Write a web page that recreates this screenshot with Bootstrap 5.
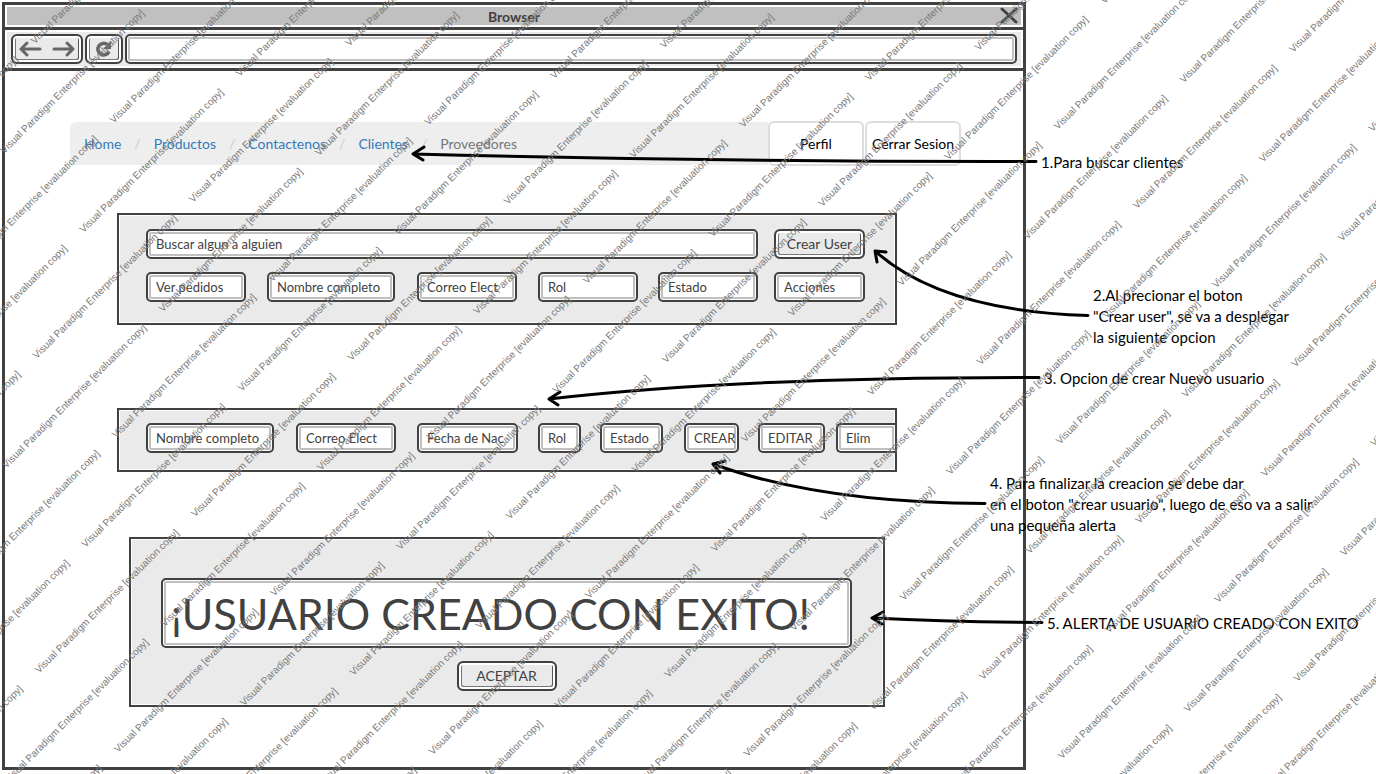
<!DOCTYPE html>
<html lang="es">
<head>
<meta charset="utf-8">
<meta name="viewport" content="width=device-width, initial-scale=1">
<title>Browser</title>
<link href="https://cdn.jsdelivr.net/npm/bootstrap@5.3.0/dist/css/bootstrap.min.css" rel="stylesheet">
<style>
  :root { --ink: #414141; --ring: #c0c0c0; --fill: #eaeaea; }
  body { font-family: "Comic Sans MS", Lato, sans-serif; font-size: 13px; line-height: 20px; color: var(--ink); background: #fff; }
  .board { display: grid; grid-template-columns: 1024fr 350fr; padding: 2px 0 0 2px; min-height: 100vh; overflow: hidden; }

  /* browser window */
  .window { border: 3px solid var(--ink); min-height: calc(100vh - 6px); align-self: start; }
  .titlebar { background: var(--ring); border: 2px solid #fff; height: 22px; line-height: 20px; font-size: 14px; font-weight: 700; }
  .close-btn { right: 2px; top: 0; width: 20px; height: 18px; }
  .toolbar { border-top: 3px solid var(--ink); border-bottom: 3px solid var(--ink); background: var(--fill); box-shadow: inset 0 0 0 2px #fff; padding: 4px 6px; gap: 2px; height: 44px; }
  .icon-btn { background: none; border: 0; padding: 0; flex: 1; display: flex; align-items: center; justify-content: center; }

  /* sketched controls */
  .sketch-btn { background: var(--fill); color: var(--ink); border: 2px solid var(--ink); border-radius: 6px; height: 30px; padding: 0; font-size: 14px; line-height: 20px;
    box-shadow: inset 0 0 0 2px #fff, inset 1px -1px 0 2px #777, inset -1px -1px 0 2px #555; }
  .sketch-input { background: #fff; color: var(--ink); border: 2px solid var(--ink); border-radius: 5px; height: 30px; width: 100%; min-width: 0; padding: 0 0 0 8px; font-size: 13px;
    box-shadow: inset 0 0 0 1px #fff, inset 0 0 0 3px var(--ring); outline: 0; }
  .nav-group { width: 72px; }
  .reload { width: 38px; }

  /* site navigation */
  .site-nav { margin: 50px 62px 0 65px; }
  .crumbs { background: #eee; border-radius: 6px 0 0 6px; margin: 1px 0; padding: 1px 14px 0; font-size: 14px; line-height: 42px; flex: 1; }
  .crumbs a { color: #337ab7; text-decoration: none; }
  .crumbs li + li::before { content: "/"; color: #ccc; padding: 0 13px; }
  .crumbs .current { color: #777; }
  .tab-btn { background: #fff; border: 2px solid #ddd; border-radius: 6px; height: 45px; width: 96px; padding: 0; color: #000; font-size: 14px; white-space: nowrap; margin-left: 1px; }

  /* panels */
  .panel { background: var(--fill); border: 2px solid var(--ink); box-shadow: inset 0 0 0 1px #fff; margin: 0 126px 0 112px; }
  .panel-search { margin-top: 47px; padding: 14px 30px 21px 27px; }
  .panel-new { margin-top: 83px; padding: 13px 0 17px 27px; }
  .panel-alert { margin: 65px 138px 0 124px; padding: 39px 31px 14px 30px; }
  .search-grid { display: grid; row-gap: 13px; grid-template-columns: 100fr 21fr 128fr 22fr 100fr 21fr 100fr 20fr 100fr 16fr 91fr; }
  .new-grid { display: grid; grid-template-columns: 128fr 22fr 100fr 21fr 101fr 20fr 43fr 19fr 63fr 21fr 55fr 19fr 67fr 11fr 59fr; }
  .c1 { grid-column: 1; } .c2 { grid-column: 3; } .c3 { grid-column: 5; } .c4 { grid-column: 7; }
  .c5 { grid-column: 9; } .c6 { grid-column: 11; } .c7 { grid-column: 13; } .c8 { grid-column: 15; }
  .wide { grid-column: 1 / 10; }
  .cut { border-right: 0; border-radius: 5px 0 0 5px; }
  .alert-field { height: 70px; font-size: 43px; }
  .accept { width: 100px; margin-top: 13px; }

  /* notes beside the window */
  .notes { color: #000; font-size: 15px; line-height: 21px; padding-top: 150px; white-space: nowrap; z-index: 1; }
  .notes p { margin: 0; }
  .n1 { padding-left: 15px; }
  .notes .n2 { margin-top: 112px; padding-left: 67px; }
  .notes .n3 { margin-top: 20px; padding-left: 18px; }
  .notes .n4 { margin: 84px 0 0 -36px; }
  .notes .n5 { margin-top: 77px; padding-left: 21px; }

  .overlay { position: absolute; left: 0; top: 0; width: 100%; height: 100%; pointer-events: none; z-index: 2; }
  .overlay-arrows { height: 774px; }
  .stamp { font: 10px "Liberation Sans", Arial, sans-serif; fill: #7a7a7a; }
</style>
</head>
<body>
<div class="board position-relative">
  <main class="window">
    <header class="titlebar text-center position-relative">Browser
      <button class="icon-btn close-btn position-absolute" aria-label="Cerrar"><svg width="20" height="18" fill="none" stroke="#414141" stroke-width="3" stroke-linecap="round"><path d="M3 2 17 15M17 2 3 15"/></svg></button>
    </header>
    <div class="toolbar d-flex">
      <div class="sketch-btn nav-group d-flex flex-shrink-0">
        <button class="icon-btn" aria-label="Atrás"><svg width="24" height="18" fill="none" stroke="#666" stroke-width="3" stroke-linecap="round" stroke-linejoin="round"><path d="M22 9H3M9 3 3 9l6 6"/></svg></button>
        <button class="icon-btn" aria-label="Adelante"><svg width="24" height="18" fill="none" stroke="#666" stroke-width="3" stroke-linecap="round" stroke-linejoin="round"><path d="M2 9h19M15 3l6 6-6 6"/></svg></button>
      </div>
      <button class="sketch-btn reload d-flex flex-shrink-0 align-items-center justify-content-center" aria-label="Recargar"><svg width="18" height="18"><path d="M14 11.500A5.800 5.800 0 1 1 12.500 4.800" fill="none" stroke="#666" stroke-width="3.500"/><path d="M16 1v8H8z" fill="#666"/></svg></button>
      <input class="sketch-input" type="text" aria-label="Dirección">
    </div>

    <div class="site-nav d-flex">
      <nav class="crumbs" aria-label="Secciones">
        <ol class="list-unstyled d-flex m-0">
          <li><a href="#">Home</a></li>
          <li><a href="#">Productos</a></li>
          <li><a href="#">Contactenos</a></li>
          <li><a href="#">Clientes</a></li>
          <li class="current">Proveedores</li>
        </ol>
      </nav>
      <button class="tab-btn ms-0">Perfil</button>
      <button class="tab-btn">Cerrar Sesion</button>
    </div>

    <section class="panel panel-search">
      <div class="search-grid">
        <input class="sketch-input wide" type="text" value="Buscar algun a alguien" aria-label="Buscar">
        <button class="sketch-btn c6">Crear User</button>
        <input class="sketch-input c1" type="text" value="Ver pedidos" aria-label="Ver pedidos">
        <input class="sketch-input c2" type="text" value="Nombre completo" aria-label="Nombre completo">
        <input class="sketch-input c3" type="text" value="Correo Elect" aria-label="Correo Elect">
        <input class="sketch-input c4" type="text" value="Rol" aria-label="Rol">
        <input class="sketch-input c5" type="text" value="Estado" aria-label="Estado">
        <input class="sketch-input c6" type="text" value="Acciones" aria-label="Acciones">
      </div>
    </section>

    <section class="panel panel-new">
      <div class="new-grid">
        <input class="sketch-input c1" type="text" value="Nombre completo" aria-label="Nombre completo">
        <input class="sketch-input c2" type="text" value="Correo Elect" aria-label="Correo Elect">
        <input class="sketch-input c3" type="text" value="Fecha de Nac" aria-label="Fecha de Nac">
        <input class="sketch-input c4" type="text" value="Rol" aria-label="Rol">
        <input class="sketch-input c5" type="text" value="Estado" aria-label="Estado">
        <input class="sketch-input c6" type="text" value="CREAR" aria-label="Crear">
        <input class="sketch-input c7" type="text" value="EDITAR" aria-label="Editar">
        <input class="sketch-input c8 cut" type="text" value="Elim" aria-label="Eliminar">
      </div>
    </section>

    <section class="panel panel-alert text-center">
      <input class="sketch-input alert-field d-block" type="text" value="¡USUARIO CREADO CON EXITO!" aria-label="Alerta">
      <button class="sketch-btn accept">ACEPTAR</button>
    </section>
  </main>

  <aside class="notes">
    <p class="n1">1.Para buscar clientes</p>
    <p class="n2">2.Al precionar el boton<br>"Crear user", se va a desplegar<br>la siguiente opcion</p>
    <p class="n3">3. Opcion de crear Nuevo usuario</p>
    <p class="n4">4. Para finalizar la creacion se debe dar<br>en el boton "crear usuario", luego de eso va a salir<br>una pequeña alerta</p>
    <p class="n5">5. ALERTA DE USUARIO CREADO CON EXITO</p>
  </aside>

  <!-- arrows from each note to its control -->
  <svg class="overlay overlay-arrows" viewBox="0 0 1376 774" preserveAspectRatio="none" fill="none" stroke="#000" stroke-width="3" stroke-linecap="round" stroke-linejoin="round">
    <path d="M1036 161.500Q720 162 413 154M424 147 413 154l10 6"/>
    <path d="M1088 315.500Q942 311 875 251M877 262l-2-11 11 1"/>
    <path d="M1039 377.500Q740 377 549 399M560 392l-11 7 9 6"/>
    <path d="M985 503.500Q820 503 713 464M725 461l-12 3 7 9"/>
    <path d="M1042 622.500Q950 622 872 618M883 612l-11 6 10 6"/>
  </svg>
  <!-- evaluation stamp repeated on diagonal rows -->
  <svg class="overlay"><g class="stamp" id="stamps" transform="rotate(-45)"></g></svg>
</div>
<script src="https://cdn.jsdelivr.net/npm/bootstrap@5.3.0/dist/js/bootstrap.bundle.min.js"></script>
<script>
  const group = document.getElementById('stamps');
  const W = innerWidth, H = innerHeight, pitch = 221, rowStep = 56;
  for (let k = 0, v = 56; v < (W + H) * .71 + 20; k++, v += rowStep) {
    for (let n = -5; n < 7; n++) {
      const u = -7 + n * pitch + (k % 2 ? 122 : 0);
      const x1 = (u + v) * .707, y1 = (v - u) * .707, x2 = (u + 200 + v) * .707, y2 = (v - u - 200) * .707;
      if (x2 < 0 || x1 > W || y1 < 0 || y2 > H) continue;
      const t = document.createElementNS('http://www.w3.org/2000/svg', 'text');
      t.setAttribute('x', u); t.setAttribute('y', v);
      t.textContent = 'Visual Paradigm Enterprise [evaluation copy]';
      group.appendChild(t);
    }
  }
</script>
</body>
</html>
